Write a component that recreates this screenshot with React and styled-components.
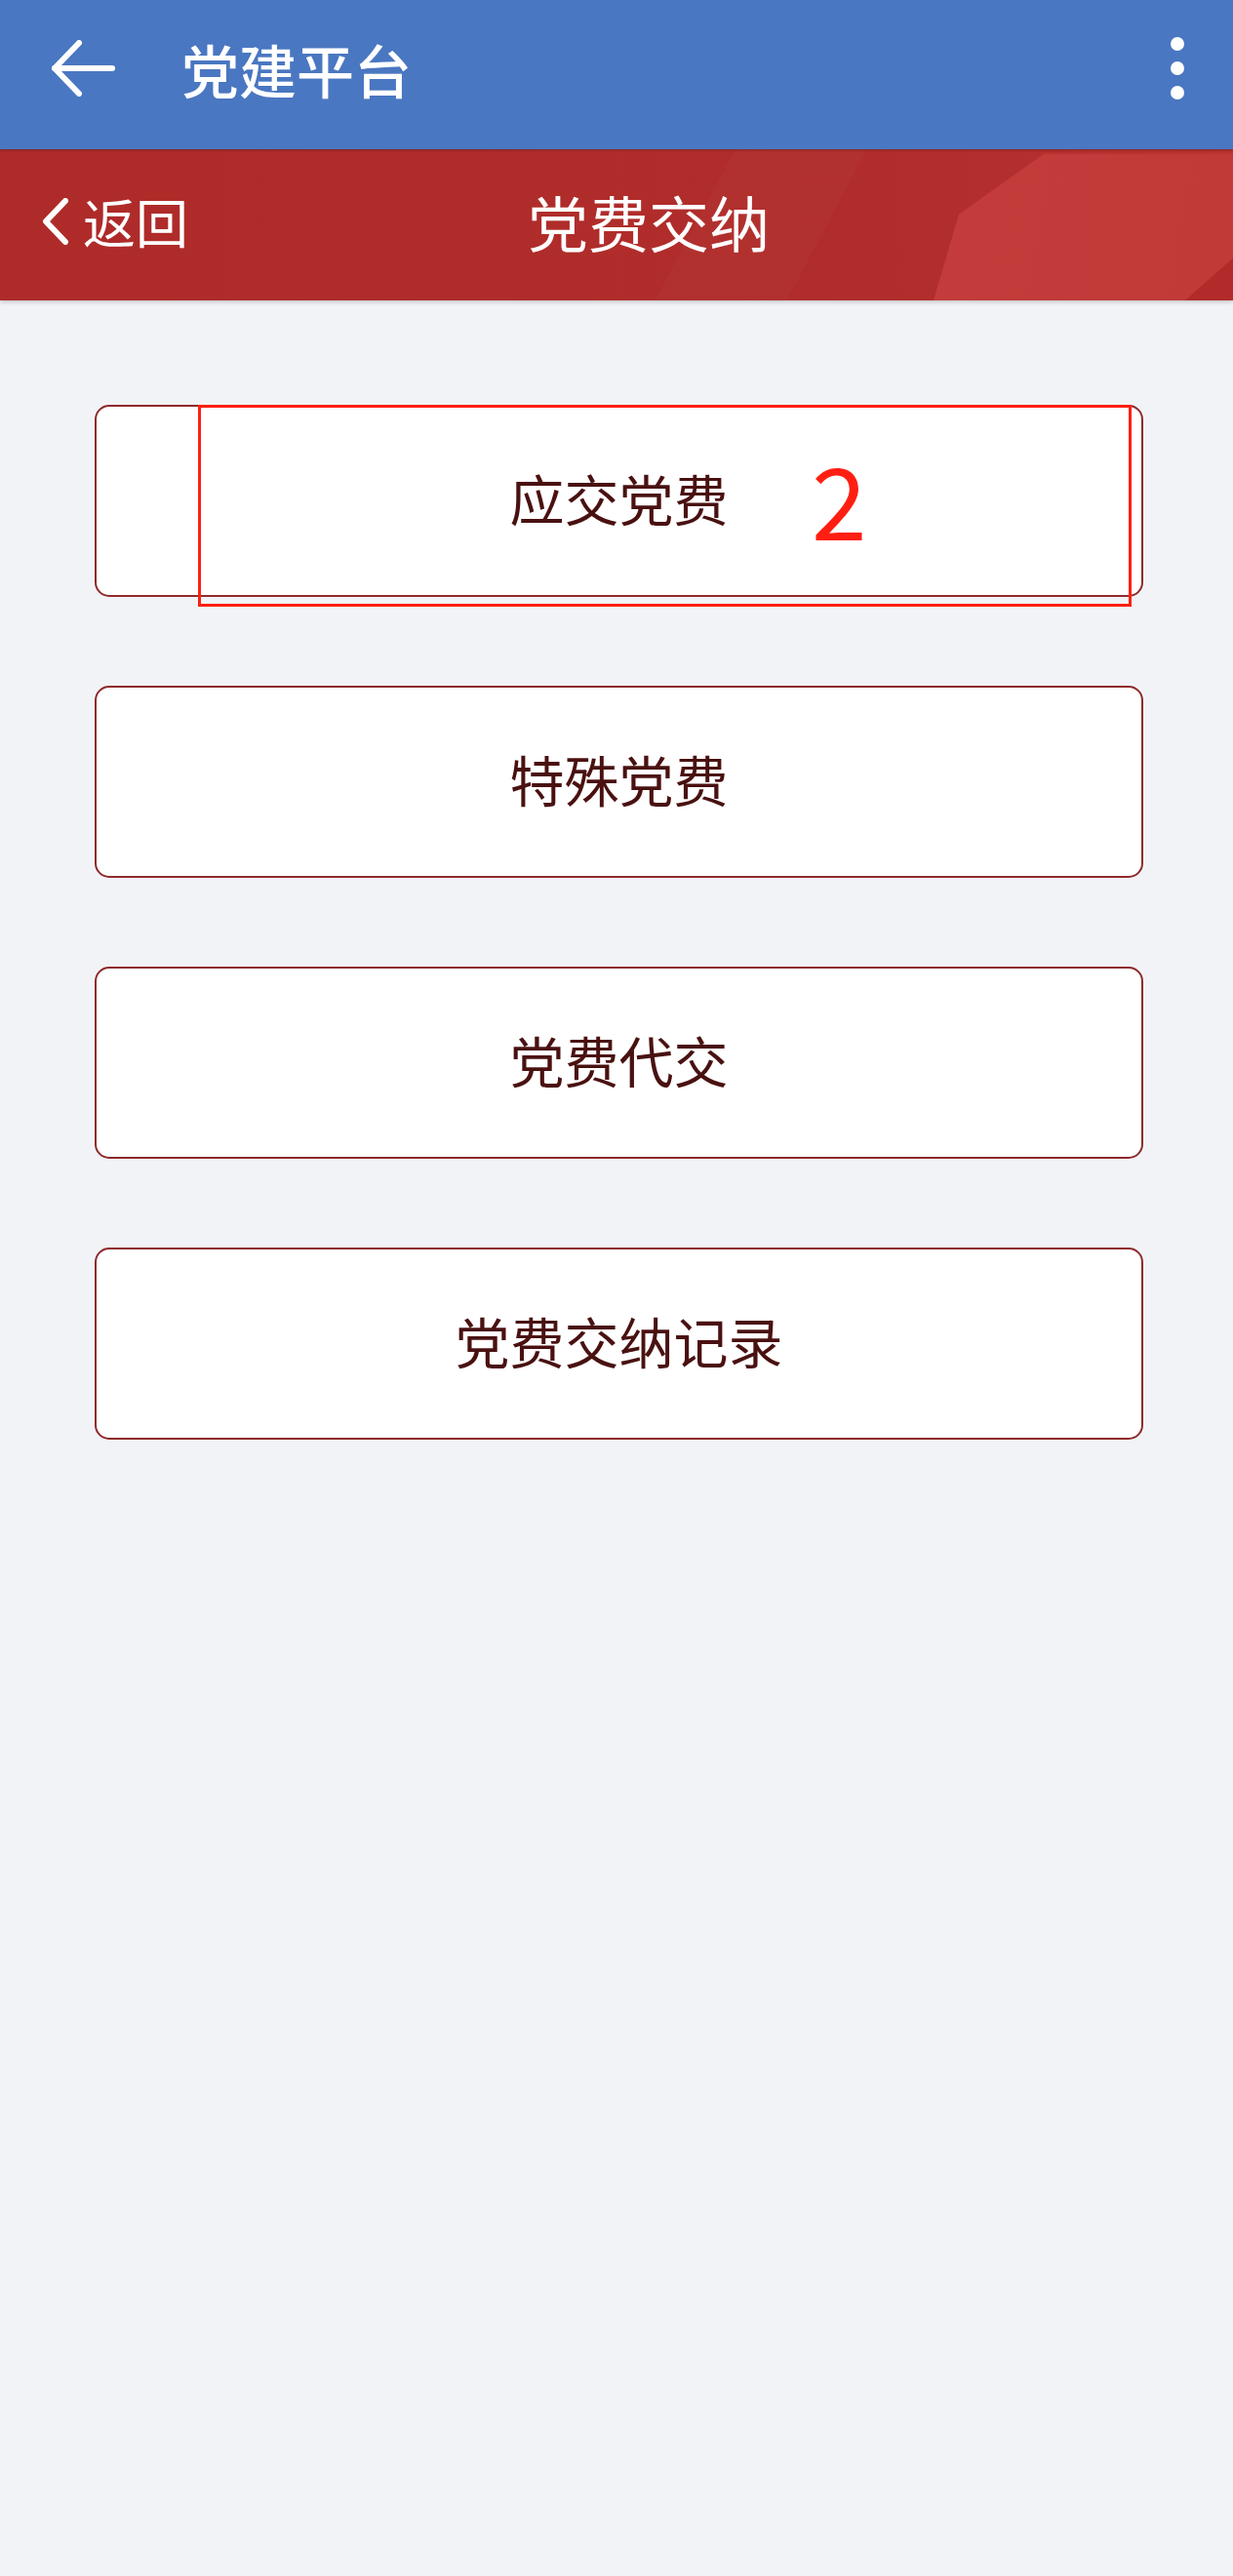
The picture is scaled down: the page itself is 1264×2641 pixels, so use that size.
import React from "react";
import styled, { createGlobalStyle } from "styled-components";

const GlobalStyle = createGlobalStyle`
  html, body {
    margin: 0;
    padding: 0;
    background: #f2f3f7;
  }
  body {
    font-family: "Noto Sans CJK SC", "Noto Sans", sans-serif;
  }
  * { box-sizing: border-box; }
`;

const Page = styled.div`
  min-height: 2641px;
  background: #f2f3f7;
  display: flex;
  flex-direction: column;
`;

const AppBar = styled.header`
  height: 153px;
  background: #4a77c1;
  display: flex;
  align-items: center;
  padding: 0 52px 13px;
  color: #fff;
  position: relative;
  z-index: 2;
  box-shadow: 0 1px 2px rgba(40, 20, 20, 0.35);
`;

const AppTitle = styled.h1`
  margin: 0 0 0 68px;
  font-size: 59px;
  font-weight: 500;
  line-height: 1;
  flex: 1;
  letter-spacing: 0;
`;

const IconButton = styled.button`
  border: 0;
  background: none;
  padding: 0;
  display: flex;
  align-items: center;
  justify-content: center;
  color: #fff;
  cursor: pointer;
`;

const Kebab = styled.div`
  display: flex;
  flex-direction: column;
  gap: 11px;
  margin-right: -2px;
  span {
    width: 14px;
    height: 14px;
    border-radius: 50%;
    background: #fff;
  }
`;

const NavBar = styled.nav`
  height: 155px;
  position: relative;
  display: flex;
  align-items: center;
  padding: 0 0 8px 43px;
  color: #fff;
  background:
    linear-gradient(118deg, rgba(255,255,255,0) 0 56%, rgba(255,255,255,0.018) 56% 66%, rgba(255,255,255,0) 66%),
    linear-gradient(90deg, #ae2b29 0%, #b02d2b 70%, #b83230 100%);
  box-shadow: 0 2px 4px rgba(0, 0, 0, 0.18);
  overflow: hidden;
  z-index: 1;

  &::before {
    content: "";
    position: absolute;
    inset: 0;
    background: linear-gradient(100deg, #d24d4e 0%, #c73e41 35%, #c13a38 100%);
    clip-path: polygon(957px 100%, 983px 43%, 1070px 3%, 100% 3%, 100% 100%);
    pointer-events: none;
  }
  &::after {
    content: "";
    position: absolute;
    inset: 0;
    background: #b22b2a;
    clip-path: polygon(100% 72%, 100% 100%, 1215px 100%);
    pointer-events: none;
  }
`;

const BackLink = styled.a`
  display: flex;
  align-items: center;
  gap: 14px;
  color: #fff;
  font-size: 54px;
  line-height: 1;
  text-decoration: none;
  position: relative;
  z-index: 1;
`;

const NavTitle = styled.h2`
  margin: 0 0 0 348px;
  font-size: 62px;
  font-weight: 400;
  line-height: 1;
  position: relative;
  z-index: 1;
`;

const Menu = styled.main`
  display: flex;
  flex-direction: column;
  gap: 91px;
  padding: 107px 92px 0 97px;
`;

const ItemWrap = styled.div`
  position: relative;
`;

const MenuButton = styled.button`
  width: 100%;
  height: 197px;
  border: 2.5px solid #8e2a2a;
  border-radius: 15px;
  background: #fff;
  color: #4a1111;
  font-family: "Noto Sans CJK SC", "Noto Sans", sans-serif;
  font-size: 56px;
  font-weight: 400;
  line-height: 1;
  display: flex;
  align-items: center;
  justify-content: center;
  cursor: pointer;
  padding: 0 0 8px;
`;

const Highlight = styled.div`
  position: absolute;
  left: 106px;
  right: 12px;
  top: 0;
  bottom: -10px;
  border: 3.5px solid #ff1f12;
  pointer-events: none;
`;

const Badge = styled.span`
  position: absolute;
  left: 735px;
  top: 44px;
  color: #ff1f12;
  font-family: "Noto Sans CJK SC", "Noto Sans", sans-serif;
  font-size: 102px;
  font-weight: 400;
  line-height: 1;
  pointer-events: none;
`;

const items = ["应交党费", "特殊党费", "党费代交", "党费交纳记录"];

export default function App() {
  return (
    <>
      <GlobalStyle />
      <Page>
        <AppBar>
          <IconButton aria-label="返回">
            <svg width="66" height="58" viewBox="0 0 66 58" fill="none" stroke="#fff" strokeWidth="6" strokeLinecap="round" strokeLinejoin="round">
              <path d="M4 29 H63" />
              <path d="M29 3 L4 29 L29 55" />
            </svg>
          </IconButton>
          <AppTitle>党建平台</AppTitle>
          <IconButton aria-label="更多">
            <Kebab>
              <span />
              <span />
              <span />
            </Kebab>
          </IconButton>
        </AppBar>
        <NavBar>
          <BackLink href="#">
            <svg width="28" height="48" viewBox="0 0 28 48" fill="none" stroke="#fff" strokeWidth="6" strokeLinecap="round" strokeLinejoin="round">
              <path d="M24 3 L4 24 L24 45" />
            </svg>
            返回
          </BackLink>
          <NavTitle>党费交纳</NavTitle>
        </NavBar>
        <Menu>
          {items.map((label, i) => (
            <ItemWrap key={label}>
              <MenuButton>{label}</MenuButton>
              {i === 0 && (
                <>
                  <Highlight />
                  <Badge>2</Badge>
                </>
              )}
            </ItemWrap>
          ))}
        </Menu>
      </Page>
    </>
  );
}
